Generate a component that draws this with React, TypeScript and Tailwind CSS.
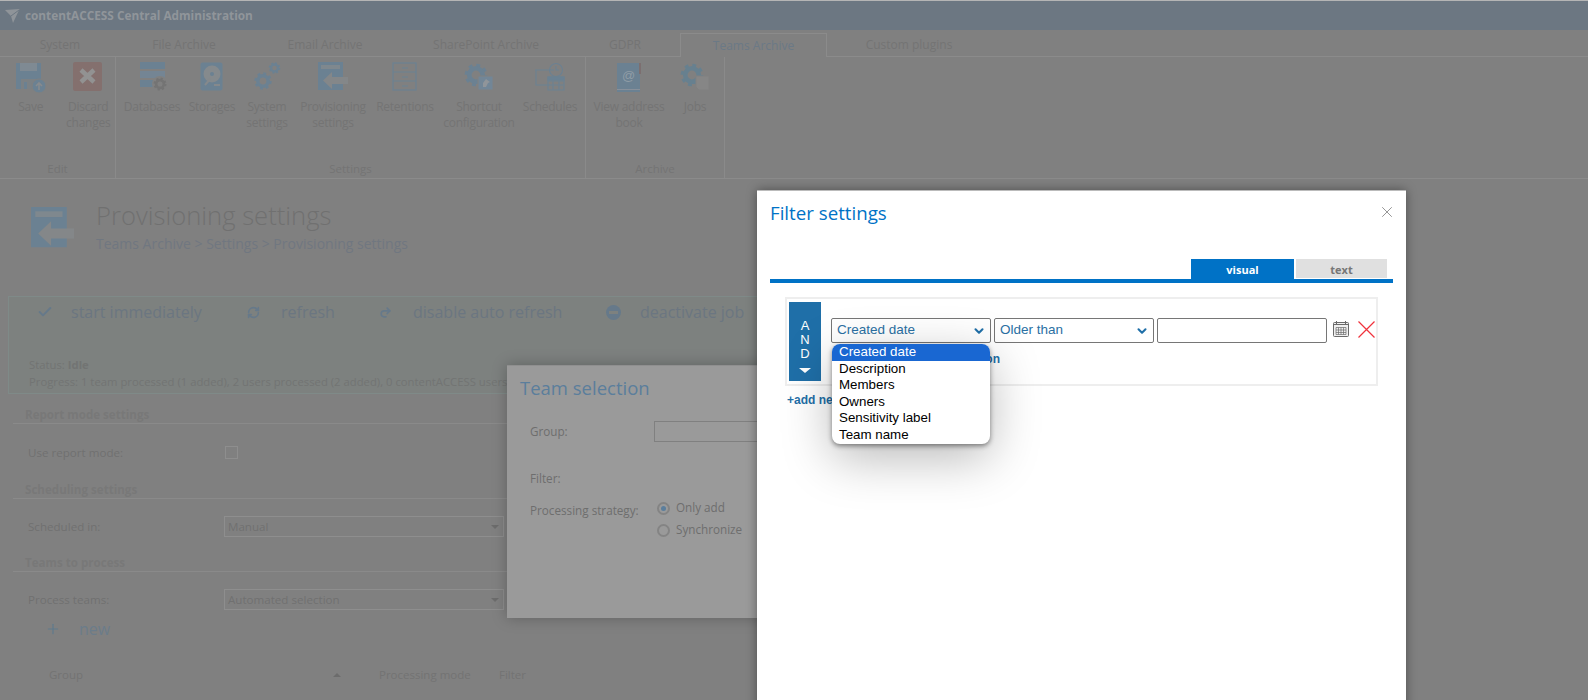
import { Check, RefreshCw, Redo2, Plus, X, ChevronDown } from 'lucide-react'

const tabs = [
  { name: 'System', w: 'w-[120px]' },
  { name: 'File Archive', w: 'w-[128px]' },
  { name: 'Email Archive', w: 'w-[154px]' },
  { name: 'SharePoint Archive', w: 'w-[168px]' },
  { name: 'GDPR', w: 'w-[110px]' },
]

const BLUE = '#6b8192'

function Gear({ x, y, r, color = BLUE }: { x: number; y: number; r: number; color?: string }) {
  const len = (2 * Math.PI * r) / 16
  return (
    <g>
      <circle cx={x} cy={y} r={r} fill="none" stroke={color} strokeWidth={r * 0.42} strokeDasharray={`${len} ${len}`} />
      <circle cx={x} cy={y} r={r * 0.72} fill="none" stroke={color} strokeWidth={r * 0.5} />
    </g>
  )
}

function SaveIcon() {
  return (
    <svg width="32" height="32" viewBox="0 0 32 32">
      <path d="M1 1h25v26H1z" fill={BLUE} />
      <path d="M5 1h17v8H5z" fill="#7f8a93" />
      <path d="M6 17h15v10H6z" fill="#7b8185" />
      <path d="M9 20h3v7H9z" fill={BLUE} />
      <circle cx="24" cy="24" r="7" fill={BLUE} stroke="#808080" />
      <path d="M24 28v-7M21 24l3-3 3 3" stroke="#888b8e" strokeWidth="1.6" fill="none" />
    </svg>
  )
}

function DiscardIcon() {
  return (
    <svg width="30" height="30" viewBox="0 0 30 30">
      <rect x="0" y="0" width="29" height="29" rx="2" fill="#84706e" />
      <path d="M8 8l13 12M21 8L8 20" stroke="#929292" strokeWidth="4.5" />
    </svg>
  )
}

function DatabaseIcon() {
  return (
    <svg width="30" height="30" viewBox="0 0 30 30">
      <path d="M0 0h25v7H0z" fill={BLUE} />
      <path d="M0 9h25v7H0z" fill="#748594" />
      <path d="M0 18h25v7H0z" fill={BLUE} />
      <circle cx="20" cy="22" r="8" fill="#808080" />
      <Gear x={20} y={22} r={5.4} color="#747474" />
    </svg>
  )
}

function StorageIcon() {
  return (
    <svg width="24" height="30" viewBox="0 0 24 30">
      <rect x="0.5" y="0.5" width="22" height="28" rx="2" fill={BLUE} />
      <circle cx="12" cy="12" r="8.5" fill="#858a8d" />
      <circle cx="12" cy="12" r="2" fill={BLUE} />
      <path d="M5 23l6-7" stroke="#85898c" strokeWidth="2" />
      <path d="M14 23h6" stroke="#85898c" strokeWidth="2" />
    </svg>
  )
}

function SystemIcon() {
  return (
    <svg width="28" height="30" viewBox="0 0 28 30">
      <Gear x={10} y={19} r={7.2} />
      <Gear x={21.5} y={6} r={4.8} />
    </svg>
  )
}

function ProvisioningIcon({ size = 30 }: { size?: number }) {
  return (
    <svg width={size} height={size} viewBox="0 0 30 30">
      <path d="M0 0h25v28H0z" fill={BLUE} />
      <path d="M3 3h19v4H3z" fill="#7f888e" />
      <path d="M30 15v7H14v5L5 18.5 14 10v5z" fill="#848789" />
    </svg>
  )
}

function RetentionIcon() {
  return (
    <svg width="26" height="30" viewBox="0 0 26 30" fill="none" stroke={BLUE} strokeWidth="1.2">
      <rect x="1" y="1" width="23" height="27" />
      <path d="M1 10h23M1 19h23M10 6h6M10 15h6M10 24h6" />
    </svg>
  )
}

function ShortcutIcon() {
  return (
    <svg width="30" height="30" viewBox="0 0 30 30">
      <Gear x={12} y={13} r={9.4} />
      <path d="M14 14h15v14H14z" fill="#728697" stroke="#808080" />
      <path d="M19 25v-4l3-4 4 3-2 1-2 4z" fill="#90959a" />
    </svg>
  )
}

function ScheduleIcon() {
  return (
    <svg width="30" height="30" viewBox="0 0 30 30" fill="none" stroke={BLUE} strokeWidth="1.1">
      <path d="M0 8h19M1 8v15h13" />
      <circle cx="21" cy="8" r="6.5" />
      <path d="M21 4v4h3" />
      <path d="M13 15h16v13H13zM13 19h16M13 23h16M18 15v13M24 15v13" />
      <path d="M13 15h16v3H13z" fill={BLUE} />
    </svg>
  )
}

function BookIcon() {
  return (
    <svg width="26" height="32" viewBox="0 0 26 32">
      <path d="M1 1h23v29H1z" fill={BLUE} />
      <path d="M1 27h23v1H1z" fill="#88909a" />
      <path d="M23 1h2v11h-2z" fill="#7c6f70" />
      <text x="12.5" y="18" textAnchor="middle" fontSize="13" fill="#8f9ca6" fontFamily="'Liberation Sans', sans-serif">@</text>
    </svg>
  )
}

function JobsIcon() {
  return (
    <svg width="32" height="30" viewBox="0 0 32 30">
      <Gear x={13} y={13} r={9.4} color="#67808f" />
      <path d="M17 14h13v14H20l-3-3z" fill="#868686" stroke="#808080" />
    </svg>
  )
}

function RibbonItem({ label, width, icon }: { label: string; width: string; icon: React.ReactNode }) {
  return (
    <div className={`flex flex-col items-center ${width}`}>
      <div className="flex h-[36px] items-start justify-center">{icon}</div>
      <div className="mt-[1px] whitespace-pre-line text-center text-[12px] leading-[16px] tracking-[-0.25px] text-[#747474]">{label}</div>
    </div>
  )
}

function RibbonGroup({ title, width, pad, children }: { title: string; width: string; pad?: string; children: React.ReactNode }) {
  return (
    <div className={`flex flex-col border-r border-[#8a8a8a] ${width}`}>
      <div className={`flex h-[104px] items-start pt-[5px] ${pad ?? ''}`}>{children}</div>
      <div className="text-center text-[11.5px] leading-[16px] text-[#747474]">{title}</div>
    </div>
  )
}

function Section({ title, children }: { title: string; children: React.ReactNode }) {
  return (
    <div>
      <div className="ml-[13px] border-b border-[#8a8a8a] pl-[12px] text-[11.6px] font-bold leading-[17px] text-[#787878]">{title}</div>
      {children}
    </div>
  )
}

function FakeSelect({ value }: { value: string }) {
  return (
    <div className="flex h-[21px] w-[280px] items-center justify-between border border-[#8e8e8e] pl-[3px] pr-[3px] text-[11.6px] text-[#707070]">
      <span>{value}</span>
      <span className="mr-[1px] mt-[1px] h-0 w-0 border-x-[4px] border-t-[4px] border-x-transparent border-t-[#6c6c6c]" />
    </div>
  )
}

function Action({ icon, label, width }: { icon: React.ReactNode; label: string; width: string }) {
  return (
    <div className={`flex shrink-0 items-center ${width}`}>
      <div className="flex w-[34px] justify-start">{icon}</div>
      <span className="text-[16px] text-[#6b7681]">{label}</span>
    </div>
  )
}

function DialogSelect({ value }: { value: string }) {
  return (
    <div className="flex h-[25px] w-[160px] shrink-0 items-center justify-between rounded-[2px] border border-[#767676] bg-white pl-[5px] pr-[4px] text-[13.5px] text-[#2a70a3]">
      <span>{value}</span>
      <ChevronDown className="h-[14px] w-[14px] text-[#1f6fa8]" strokeWidth={3.5} />
    </div>
  )
}

const options = ['Description', 'Members', 'Owners', 'Sensitivity label', 'Team name']

export default function App() {
  return (
    <div className="relative h-[700px] w-full overflow-hidden bg-[#808080] font-['Open_Sans',sans-serif]">
      <div className="h-[1px] bg-[#b5b5b5]" />
      <div className="flex h-[29px] items-center bg-[#6c7782] pl-[5px]">
        <svg width="15" height="14" viewBox="0 0 15 14">
          <path d="M0 1L14.5 0L8 14L6 7z" fill="#8f9499" />
          <path d="M6 7l8-6" stroke="#6c7782" strokeWidth="1" />
        </svg>
        <span className="ml-[5px] text-[11.8px] font-bold text-[#90959a]">contentACCESS Central Administration</span>
      </div>

      <div className="flex h-[27px] items-end border-b border-[#8b8b8b] text-[12px] text-[#747474]">
        {tabs.map((t) => (
          <div key={t.name} className={`flex h-[23px] items-center justify-center ${t.w}`}>
            {t.name}
          </div>
        ))}
        <div className="-mb-px flex h-[24px] w-[147px] items-center justify-center border-x border-t border-[#8b8b8b] bg-[#808080] text-[#6b7986]">
          Teams Archive
        </div>
        <div className="flex h-[23px] w-[164px] items-center justify-center">Custom plugins</div>
      </div>

      <div className="flex h-[122px] border-b border-[#8b8b8b]">
        <RibbonGroup title="Edit" width="w-[116px]">
          <RibbonItem label="Save" width="w-[62px]" icon={<SaveIcon />} />
          <RibbonItem label={'Discard\nchanges'} width="w-[54px]" icon={<DiscardIcon />} />
        </RibbonGroup>
        <RibbonGroup title="Settings" width="w-[470px]" pad="pl-[6px]">
          <RibbonItem label="Databases" width="w-[60px]" icon={<div className="pl-[5px]"><DatabaseIcon /></div>} />
          <RibbonItem label="Storages" width="w-[60px]" icon={<StorageIcon />} />
          <RibbonItem label={'System\nsettings'} width="w-[50px]" icon={<SystemIcon />} />
          <RibbonItem label={'Provisioning\nsettings'} width="w-[82px]" icon={<ProvisioningIcon />} />
          <RibbonItem label="Retentions" width="w-[62px]" icon={<RetentionIcon />} />
          <RibbonItem label={'Shortcut\nconfiguration'} width="w-[86px]" icon={<ShortcutIcon />} />
          <RibbonItem label="Schedules" width="w-[56px]" icon={<ScheduleIcon />} />
        </RibbonGroup>
        <RibbonGroup title="Archive" width="w-[139px]">
          <RibbonItem label={'View address\nbook'} width="w-[86px]" icon={<BookIcon />} />
          <RibbonItem label="Jobs" width="w-[46px]" icon={<JobsIcon />} />
        </RibbonGroup>
      </div>

      <div className="flex h-[45px] pl-[31px] pt-[28px] box-content">
        <ProvisioningIcon size={43} />
        <div className="ml-[22px]">
          <div className="-mt-[8px] text-[25.6px] font-light leading-[34px] text-[#707070]">Provisioning settings</div>
          <div className="mt-[1px] text-[14px] leading-[20px] text-[#707780]">{'Teams Archive > Settings > Provisioning settings'}</div>
        </div>
      </div>

      <div className="ml-[8px] mt-[44px] h-[98px] w-[750px] border border-[#7f8a88] bg-[#7d817f] pl-[28px] pt-[1px]">
        <div className="flex h-[28px] items-center">
          <Action width="w-[210px]" label="start immediately" icon={<Check className="h-[16px] w-[16px] text-[#66798a]" strokeWidth={3} />} />
          <Action width="w-[132px]" label="refresh" icon={<RefreshCw className="h-[13px] w-[13px] text-[#66798a]" strokeWidth={3} />} />
          <Action width="w-[227px]" label="disable auto refresh" icon={<Redo2 className="h-[13px] w-[13px] text-[#66798a]" strokeWidth={3} />} />
          <Action
            width="w-[150px]"
            label="deactivate job"
            icon={
              <svg width="15" height="15" viewBox="0 0 15 15">
                <circle cx="7.5" cy="7.5" r="7.5" fill="#66798a" />
                <rect x="3" y="6" width="9" height="3" fill="#7d817f" />
              </svg>
            }
          />
        </div>
        <div className="-ml-[8px] mt-[30px] text-[11.3px] leading-[17px] text-[#727473]">
          Status: <b>Idle</b>
        </div>
        <div className="-ml-[8px] whitespace-nowrap text-[11.3px] leading-[17px] text-[#727473]">
          Progress: 1 team processed (1 added), 2 users processed (2 added), 0 contentACCESS users
        </div>
      </div>

      <div className="mt-[12px] w-[745px]">
        <Section title="Report mode settings">
          <div className="flex h-[57px] items-center pl-[28px] text-[11.6px] text-[#707070]">
            <span className="w-[197px]">Use report mode:</span>
            <span className="h-[13px] w-[13px] border border-[#8e8e8e]" />
          </div>
        </Section>
        <Section title="Scheduling settings">
          <div className="flex h-[55px] items-center pl-[28px] text-[11.6px] text-[#707070]">
            <span className="w-[196px]">Scheduled in:</span>
            <FakeSelect value="Manual" />
          </div>
        </Section>
        <Section title="Teams to process">
          <div className="flex h-[55px] items-center pl-[28px] text-[11.6px] text-[#707070]">
            <span className="w-[196px]">Process teams:</span>
            <FakeSelect value="Automated selection" />
          </div>
        </Section>
        <div className="-mt-[10px] flex items-center pl-[45px] text-[#6b7c8a]">
          <Plus className="h-[16px] w-[16px] text-[#5f7a8c]" strokeWidth={1.8} />
          <span className="ml-[18px] text-[16px] leading-[24px]">new</span>
        </div>
        <div className="mt-[25px] flex items-center pl-[49px] text-[11.5px] text-[#737373]">
          <span className="w-[284px]">Group</span>
          <span className="h-0 w-0 border-x-[4px] border-b-[4px] border-x-transparent border-b-[#6c6c6c]" />
          <span className="ml-[38px] w-[120px]">Processing mode</span>
          <span>Filter</span>
        </div>
      </div>

      {/* team selection window, sits behind the filter window */}
      <div className="absolute left-[507px] top-[365px] h-[253px] w-[270px] border-t border-[#8f8f8f] bg-[#9a9a9a] pl-[13px] pt-[9px] shadow-[0_0_14px_rgba(0,0,0,0.25)]">
        <div className="text-[18.5px] leading-[26px] text-[#5b7e9c]">Team selection</div>
        <div className="mt-[20px] flex h-[21px] items-center pl-[10px] text-[11.7px] text-[#6e6e6e]">
          <span className="w-[124px]">Group:</span>
          <span className="h-[21px] flex-1 border border-[#808080]" />
        </div>
        <div className="mt-[27px] pl-[10px] text-[11.7px] leading-[18px] text-[#6e6e6e]">Filter:</div>
        <div className="mt-[15px] flex pl-[10px] text-[11.7px] text-[#6e6e6e]">
          <span className="w-[127px]">Processing strategy:</span>
          <div className="-mt-[3px] flex flex-col gap-[4px]">
            <div className="flex h-[18px] items-center gap-[6px]">
              <span className="flex h-[13px] w-[13px] items-center justify-center rounded-full border-2 border-[#848484]">
                <span className="h-[5px] w-[5px] rounded-full bg-[#5b7e9c]" />
              </span>
              Only add
            </div>
            <div className="flex h-[18px] items-center gap-[6px]">
              <span className="h-[13px] w-[13px] rounded-full border-2 border-[#848484]" />
              Synchronize
            </div>
          </div>
        </div>
      </div>

      {/* filter settings window */}
      <div className="absolute left-[757px] top-[190px] h-[520px] w-[649px] border-t border-[#bbbbbb] bg-white shadow-[0_0_10px_rgba(0,0,0,0.4)]">
        <div className="flex items-start justify-between pl-[13px] pr-[10px] pt-[7px]">
          <span className="text-[18.7px] leading-[30px] text-[#0072c6]">Filter settings</span>
          <X className="mt-[5px] h-[18px] w-[18px] text-[#8a8a8a]" strokeWidth={1.2} />
        </div>
        <div className="mx-[13px] mt-[31px] flex h-[20px] justify-end pr-[6px] text-[11px] font-bold">
          <div className="flex w-[103px] items-center justify-center bg-[#0072c6] pt-[3px] text-white">visual</div>
          <div className="ml-[2px] flex h-[19px] w-[91px] items-center justify-center bg-[#e0e0e0] pt-[3px] text-[#767676]">text</div>
        </div>
        <div className="mx-[13px] h-[4px] bg-[#0072c6]" />

        <div className="relative mx-[28px] mt-[14px] font-['Liberation_Sans',Arial,sans-serif]">
          <div className="flex h-[89px] w-[593px] border-2 border-[#eeeeee] px-[2px] py-[3px]">
            <div className="flex w-[32px] shrink-0 flex-col items-center bg-[#1f6fa8] pt-[17px] text-[13px] leading-[14px] text-white">
              <span>A</span>
              <span>N</span>
              <span>D</span>
              <span className="mt-[7px] h-0 w-0 border-x-[6px] border-t-[5px] border-x-transparent border-t-white" />
            </div>
            <div className="ml-[10px] min-w-0 flex-1 pt-[16px]">
              <div className="flex items-start gap-[3px]">
                <DialogSelect value="Created date" />
                <DialogSelect value="Older than" />
                <div className="h-[25px] w-[170px] shrink-0 rounded-[2px] border border-[#767676]" />
                <svg className="ml-[3px] mt-[2px] shrink-0" width="17" height="18" viewBox="0 0 17 18" fill="none" stroke="#6a6a6a">
                  <rect x="0.5" y="2.5" width="15" height="14" rx="1" fill="#f0f0f0" />
                  <path d="M3.5 1v3M12.5 1v3M0.5 4.5h15" />
                  <path d="M3 7.5h10v7H3zM3 10h10M3 12.5h10M5.5 7.5v7M8 7.5v7M10.5 7.5v7" strokeWidth="0.7" />
                </svg>
                <svg className="ml-[5px] mt-[3px] shrink-0" width="17" height="17" viewBox="0 0 17 17" fill="none" stroke="#f0323c" strokeWidth="1.2">
                  <path d="M0.5 0.5l16 16M16.5 0.5l-16 16" />
                </svg>
              </div>
              <div className="mt-[7px] w-[169px] whitespace-nowrap text-right text-[12px] font-bold text-[#1f6fa8]">+add new condition</div>
            </div>
          </div>
          <div className="mt-[5px] pl-[2px] text-[12px] font-bold text-[#1f6fa8]">+add new condition</div>

          {/* open list of the first select */}
          <div className="absolute left-[47px] top-[47px] w-[158px] overflow-hidden rounded-[8px] bg-white text-[13.33px] leading-[16.6px] text-black shadow-[0_2px_5px_rgba(0,0,0,0.45),0_14px_50px_rgba(0,0,0,0.28)]">
            <div className="bg-[#1967d2] pl-[7px] text-white">Created date</div>
            {options.map((o) => (
              <div key={o} className="pl-[7px]">
                {o}
              </div>
            ))}
          </div>
        </div>
      </div>
    </div>
  )
}
